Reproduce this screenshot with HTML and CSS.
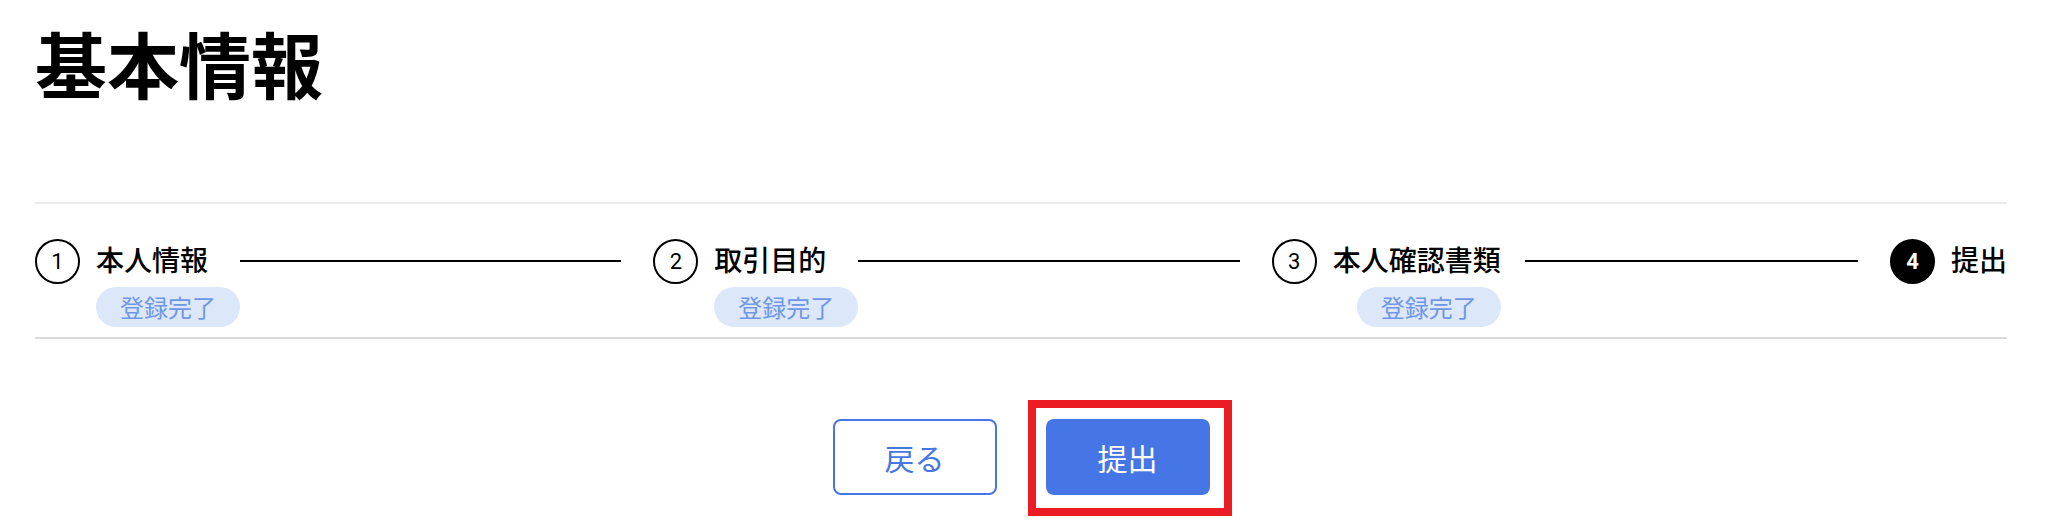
FILE: index.html
```html
<!DOCTYPE html>
<html lang="ja">
<head>
<meta charset="utf-8">
<title>基本情報</title>
<link rel="stylesheet" href="styles.css">
</head>
<body>
<main class="page">
  <h1 class="title">基本情報</h1>
  <section class="stepper">
    <div class="step">
      <span class="step-num">1</span>
      <div class="step-text">
        <span class="step-label">本人情報</span>
        <span class="badge">登録完了</span>
      </div>
      <span class="connector"></span>
    </div>
    <div class="step">
      <span class="step-num">2</span>
      <div class="step-text">
        <span class="step-label">取引目的</span>
        <span class="badge">登録完了</span>
      </div>
      <span class="connector"></span>
    </div>
    <div class="step">
      <span class="step-num">3</span>
      <div class="step-text">
        <span class="step-label">本人確認書類</span>
        <span class="badge">登録完了</span>
      </div>
      <span class="connector"></span>
    </div>
    <div class="step step--last">
      <span class="step-num step-num--active">4</span>
      <div class="step-text">
        <span class="step-label step-label--last">提出</span>
      </div>
    </div>
  </section>
  <div class="actions">
    <button class="btn btn--outline" type="button">戻る</button>
    <div class="highlight">
      <button class="btn btn--primary" type="button">提出</button>
    </div>
  </div>
</main>
</body>
</html>
```

FILE: styles.css
```css
* { box-sizing: border-box; }

html, body {
  margin: 0;
  padding: 0;
  background: #ffffff;
}

body {
  font-family: "Noto Sans CJK JP", "Noto Sans", sans-serif;
  color: #000000;
}

.page {
  padding: 0 55px 28px 35px;
}

.title {
  margin: 26px 0 0 0;
  font-size: 72px;
  line-height: 72px;
  font-weight: 700;
  height: 176px;
}

.stepper {
  display: flex;
  align-items: flex-start;
  border-top: 2px solid #ebebeb;
  border-bottom: 2px solid #dadada;
  padding: 35px 0 10px 0;
}

.step {
  display: flex;
  align-items: flex-start;
  flex: 1 1 0;
  min-width: 0;
}

.step--last {
  flex: 0 0 auto;
}

.step-num {
  flex: 0 0 45px;
  width: 45px;
  height: 45px;
  border: 2px solid #000000;
  border-radius: 50%;
  display: flex;
  align-items: center;
  justify-content: center;
  font-family: Roboto, "Noto Sans", sans-serif;
  font-size: 22px;
  line-height: 1;
  margin-right: 16px;
}

.step-num--active {
  background: #000000;
  color: #ffffff;
  font-weight: 700;
}

.step-text {
  display: flex;
  flex-direction: column;
  align-items: center;
}

.step-label {
  align-self: stretch;
  font-size: 28px;
  font-weight: 500;
  line-height: 41px;
  padding-right: 24px;
  white-space: nowrap;
}

.step-label--last {
  padding-right: 0;
}

.badge {
  margin-top: 7px;
  height: 40px;
  padding: 0 24px;
  border-radius: 20px;
  background: #dde7fa;
  color: #6f97e6;
  font-size: 24px;
  line-height: 40px;
  white-space: nowrap;
}

.connector {
  flex: 1 1 auto;
  height: 2px;
  background: #000000;
  margin-top: 21px;
  margin-right: 32px;
}

.actions {
  display: flex;
  justify-content: center;
  align-items: flex-start;
  gap: 49px;
  margin-top: 80px;
}

.btn {
  display: block;
  width: 164px;
  height: 76px;
  margin: 0;
  border-radius: 8px;
  font-family: "Noto Sans CJK JP", "Noto Sans", sans-serif;
  font-size: 30px;
  font-weight: 400;
  cursor: pointer;
  padding: 0;
}

.btn--outline {
  background: #ffffff;
  color: #4676e6;
  border: 2px solid #4676e6;
}

.btn--primary {
  background: #4676e6;
  color: #ffffff;
  border: none;
}

.highlight {
  position: relative;
  width: 164px;
  height: 76px;
}

.highlight::after {
  content: "";
  position: absolute;
  top: -19px;
  right: -22px;
  bottom: -21px;
  left: -18px;
  border: 8px solid #ec1c24;
  pointer-events: none;
}
```
